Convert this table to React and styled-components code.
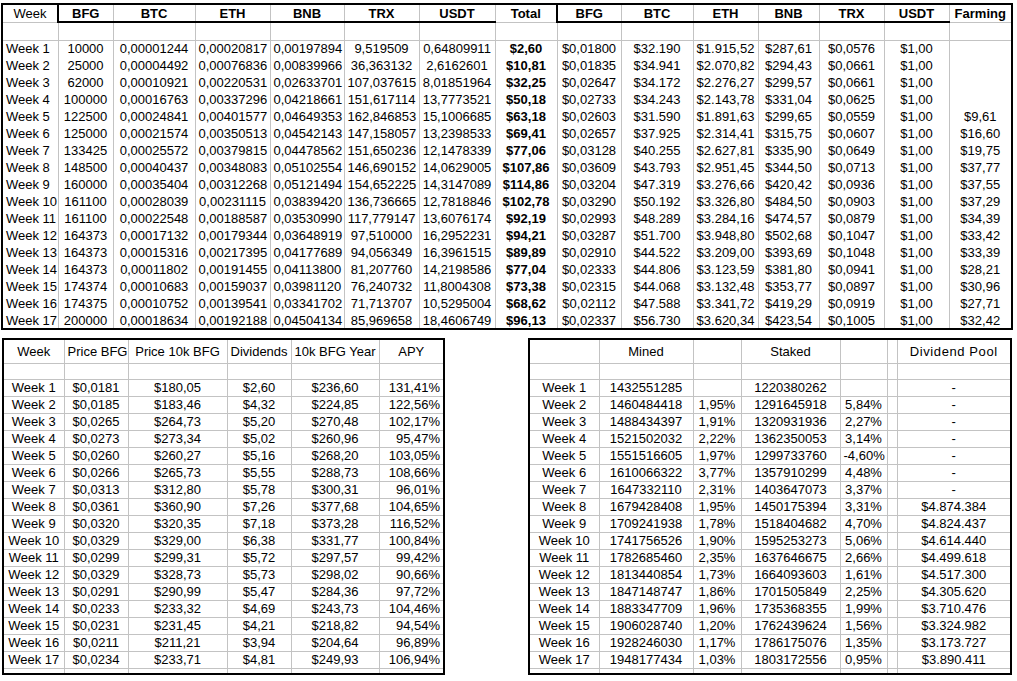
import React from "react";
import styled, { createGlobalStyle } from "styled-components";

const GRID = "#c3c3c3";
const INK = "#000";

const topHeads = [
    { t: "Week", w: 56 },
    { t: "BFG", w: 55, bold: true, edge: true, under: true },
    { t: "BTC", w: 82, bold: true, under: true },
    { t: "ETH", w: 75, bold: true, under: true },
    { t: "BNB", w: 74, bold: true, under: true },
    { t: "TRX", w: 75, bold: true, under: true },
    { t: "USDT", w: 76, bold: true, under: true },
    { t: "Total", w: 62, bold: true },
    { t: "BFG", w: 64, bold: true, edge: true, under: true },
    { t: "BTC", w: 72, bold: true, under: true },
    { t: "ETH", w: 65, bold: true, under: true },
    { t: "BNB", w: 61, bold: true, under: true },
    { t: "TRX", w: 65, bold: true, under: true },
    { t: "USDT", w: 65, bold: true, under: true },
    { t: "Farming", w: 63, bold: true },
];

const topRows = [
    "10000|0,00001244|0,00020817|0,00197894|9,519509|0,64809911|$2,60|$0,01800|$32.190|$1.915,52|$287,61|$0,0576|$1,00|",
    "25000|0,00004492|0,00076836|0,00839966|36,363132|2,6162601|$10,81|$0,01835|$34.941|$2.070,82|$294,43|$0,0661|$1,00|",
    "62000|0,00010921|0,00220531|0,02633701|107,037615|8,01851964|$32,25|$0,02647|$34.172|$2.276,27|$299,57|$0,0661|$1,00|",
    "100000|0,00016763|0,00337296|0,04218661|151,617114|13,7773521|$50,18|$0,02733|$34.243|$2.143,78|$331,04|$0,0625|$1,00|",
    "122500|0,00024841|0,00401577|0,04649353|162,846853|15,1006685|$63,18|$0,02603|$31.590|$1.891,63|$299,65|$0,0559|$1,00|$9,61",
    "125000|0,00021574|0,00350513|0,04542143|147,158057|13,2398533|$69,41|$0,02657|$37.925|$2.314,41|$315,75|$0,0607|$1,00|$16,60",
    "133425|0,00025572|0,00379815|0,04478562|151,650236|12,1478339|$77,06|$0,03128|$40.255|$2.627,81|$335,90|$0,0649|$1,00|$19,75",
    "148500|0,00040437|0,00348083|0,05102554|146,690152|14,0629005|$107,86|$0,03609|$43.793|$2.951,45|$344,50|$0,0713|$1,00|$37,77",
    "160000|0,00035404|0,00312268|0,05121494|154,652225|14,3147089|$114,86|$0,03204|$47.319|$3.276,66|$420,42|$0,0936|$1,00|$37,55",
    "161100|0,00028039|0,00231115|0,03839420|136,736665|12,7818846|$102,78|$0,03290|$50.192|$3.326,80|$484,50|$0,0903|$1,00|$37,29",
    "161100|0,00022548|0,00188587|0,03530990|117,779147|13,6076174|$92,19|$0,02993|$48.289|$3.284,16|$474,57|$0,0879|$1,00|$34,39",
    "164373|0,00017132|0,00179344|0,03648919|97,510000|16,2952231|$94,21|$0,03287|$51.700|$3.948,80|$502,68|$0,1047|$1,00|$33,42",
    "164373|0,00015316|0,00217395|0,04177689|94,056349|16,3961515|$89,89|$0,02910|$44.522|$3.209,00|$393,69|$0,1048|$1,00|$33,39",
    "164373|0,00011802|0,00191455|0,04113800|81,207760|14,2198586|$77,04|$0,02333|$44.806|$3.123,59|$381,80|$0,0941|$1,00|$28,21",
    "174374|0,00010683|0,00159037|0,03981120|76,240732|11,8004308|$73,38|$0,02315|$44.068|$3.132,48|$353,77|$0,0897|$1,00|$30,96",
    "174375|0,00010752|0,00139541|0,03341702|71,713707|10,5295004|$68,62|$0,02112|$47.588|$3.341,72|$419,29|$0,0919|$1,00|$27,71",
    "200000|0,00018634|0,00192188|0,04504134|85,969658|18,4606749|$96,13|$0,02337|$56.730|$3.620,34|$423,54|$0,1005|$1,00|$32,42",
];

const apyHeads = [
    { t: "Week", w: 61 },
    { t: "Price BFG", w: 64 },
    { t: "Price 10k BFG", w: 99 },
    { t: "Dividends", w: 64 },
    { t: "10k BFG Year", w: 88 },
    { t: "APY", w: 65 },
];

const apyRows = [
    "$0,0181|$180,05|$2,60|$236,60|131,41%",
    "$0,0185|$183,46|$4,32|$224,85|122,56%",
    "$0,0265|$264,73|$5,20|$270,48|102,17%",
    "$0,0273|$273,34|$5,02|$260,96|95,47%",
    "$0,0260|$260,27|$5,16|$268,20|103,05%",
    "$0,0266|$265,73|$5,55|$288,73|108,66%",
    "$0,0313|$312,80|$5,78|$300,31|96,01%",
    "$0,0361|$360,90|$7,26|$377,68|104,65%",
    "$0,0320|$320,35|$7,18|$373,28|116,52%",
    "$0,0329|$329,00|$6,38|$331,77|100,84%",
    "$0,0299|$299,31|$5,72|$297,57|99,42%",
    "$0,0329|$328,73|$5,73|$298,02|90,66%",
    "$0,0291|$290,99|$5,47|$284,36|97,72%",
    "$0,0233|$233,32|$4,69|$243,73|104,46%",
    "$0,0231|$231,45|$4,21|$218,82|94,54%",
    "$0,0211|$211,21|$3,94|$204,64|96,89%",
    "$0,0234|$233,71|$4,81|$249,93|106,94%",
];

const poolHeads = [
    { t: "", w: 70 },
    { t: "Mined", w: 94 },
    { t: "", w: 48 },
    { t: "Staked", w: 99 },
    { t: "", w: 47 },
    { t: "", w: 10 },
    { t: "Dividend Pool", w: 114, wide: true },
];

const poolRows = [
    "1432551285||1220380262|||-",
    "1460484418|1,95%|1291645918|5,84%||-",
    "1488434397|1,91%|1320931936|2,27%||-",
    "1521502032|2,22%|1362350053|3,14%||-",
    "1551516605|1,97%|1299733760|-4,60%||-",
    "1610066322|3,77%|1357910299|4,48%||-",
    "1647332110|2,31%|1403647073|3,37%||-",
    "1679428408|1,95%|1450175394|3,31%||$4.874.384",
    "1709241938|1,78%|1518404682|4,70%||$4.824.437",
    "1741756526|1,90%|1595253273|5,06%||$4.614.440",
    "1782685460|2,35%|1637646675|2,66%||$4.499.618",
    "1813440854|1,73%|1664093603|1,61%||$4.517.300",
    "1847148747|1,86%|1701505849|2,25%||$4.305.620",
    "1883347709|1,96%|1735368355|1,99%||$3.710.476",
    "1906028740|1,20%|1762439624|1,56%||$3.324.982",
    "1928246030|1,17%|1786175076|1,35%||$3.173.727",
    "1948177434|1,03%|1803172556|0,95%||$3.890.411",
];

const App = () => {
    return (
        <Page>
            <GlobalStyle />
            <Sheet $width={1012}>
                <colgroup>
                    {topHeads.map((h, i) => <col key={i} style={{ width: h.w }} />)}
                </colgroup>
                <thead>
                    <Row $h={18}>
                        {topHeads.map((h, i) => (
                            <TopHead key={i} $bold={h.bold} $edge={h.edge} $under={h.under}>
                                {h.t}
                            </TopHead>
                        ))}
                    </Row>
                </thead>
                <tbody>
                    <Row $h={18}>
                        {topHeads.map((h, i) => <BlankCell key={i} />)}
                    </Row>
                    {topRows.map((r, i) => (
                        <Row key={i} $h={17}>
                            <TopCell $align="left">Week {i + 1}</TopCell>
                            {r.split("|").map((v, j) => (
                                <TopCell key={j} $bold={j === 6}>{v}</TopCell>
                            ))}
                        </Row>
                    ))}
                </tbody>
            </Sheet>

            <Lower>
                <Sheet $width={443}>
                    <colgroup>
                        {apyHeads.map((h, i) => <col key={i} style={{ width: h.w }} />)}
                    </colgroup>
                    <thead>
                        <Row $h={24}>
                            {apyHeads.map((h, i) => <LowHead key={i}>{h.t}</LowHead>)}
                        </Row>
                    </thead>
                    <tbody>
                        <Row $h={16}>
                            {apyHeads.map((h, i) => <LowCell key={i} />)}
                        </Row>
                        {apyRows.map((r, i) => (
                            <Row key={i} $h={17}>
                                <LowCell>Week {i + 1}</LowCell>
                                {r.split("|").map((v, j) => (
                                    <LowCell key={j} $align={j === 4 ? "right" : "center"}>{v}</LowCell>
                                ))}
                            </Row>
                        ))}
                        <Row $h={5}>
                            {apyHeads.map((h, i) => <Sliver key={i} />)}
                        </Row>
                    </tbody>
                </Sheet>

                <Sheet $width={484}>
                    <colgroup>
                        {poolHeads.map((h, i) => <col key={i} style={{ width: h.w }} />)}
                    </colgroup>
                    <thead>
                        <Row $h={24}>
                            {poolHeads.map((h, i) => <LowHead key={i} $wide={h.wide}>{h.t}</LowHead>)}
                        </Row>
                    </thead>
                    <tbody>
                        <Row $h={16}>
                            {poolHeads.map((h, i) => <LowCell key={i} />)}
                        </Row>
                        {poolRows.map((r, i) => (
                            <Row key={i} $h={17}>
                                <LowCell>Week {i + 1}</LowCell>
                                {r.split("|").map((v, j) => (
                                    <LowCell key={j}>{v}</LowCell>
                                ))}
                            </Row>
                        ))}
                        <Row $h={5}>
                            {poolHeads.map((h, i) => <Sliver key={i} />)}
                        </Row>
                    </tbody>
                </Sheet>
            </Lower>
        </Page>
    );
};

export default App;

// Styled Components
const GlobalStyle = createGlobalStyle`
    html, body {
        margin: 0;
        padding: 0;
        background: #fff;
    }
    body {
        font-family: "Liberation Sans", Arial, sans-serif;
        font-size: 13px;
        color: ${INK};
    }
`;

const Page = styled.div`
    width: 1017px;
    height: 681px;
    padding: 3px 0 0 1px;
    box-sizing: border-box;
    overflow: hidden;
`;

const Sheet = styled.table`
    width: ${p => p.$width}px;
    border-collapse: collapse;
    table-layout: fixed;
    border: 2px solid #000;
`;

const Row = styled.tr`
    height: ${p => p.$h}px;
`;

const cellBase = `
    padding: 0 3px;
    white-space: nowrap;
    overflow: hidden;
    font-size: 13px;
    line-height: 15px;
    color: ${INK};
    vertical-align: middle;
`;

const TopHead = styled.th`
    ${cellBase}
    text-align: center;
    font-weight: ${p => (p.$bold ? 700 : 400)};
    border-top: 2px solid #000;
    border-left: ${p => (p.$edge ? "2px solid #000" : `1px solid ${GRID}`)};
    border-right: 1px solid ${GRID};
    border-bottom: ${p => (p.$under ? "2px solid #000" : `1px solid ${GRID}`)};
`;

const BlankCell = styled.td`
    ${cellBase}
    border-left: 1px solid ${GRID};
    border-right: 1px solid ${GRID};
    border-bottom: 1px solid ${GRID};
`;

const TopCell = styled.td`
    ${cellBase}
    text-align: ${p => p.$align || "center"};
    font-weight: ${p => (p.$bold ? 700 : 400)};
    border-left: 1px solid ${GRID};
    border-right: 1px solid ${GRID};
    border-top: none;
    border-bottom: none;
`;

const Lower = styled.div`
    display: flex;
    align-items: flex-start;
    gap: 83px;
    margin-top: 8px;
    padding-left: 1px;
`;

const LowHead = styled.th`
    ${cellBase}
    text-align: center;
    font-weight: 400;
    letter-spacing: ${p => (p.$wide ? "0.6px" : "0")};
    border: 1px solid ${GRID};
`;

const LowCell = styled.td`
    ${cellBase}
    text-align: ${p => p.$align || "center"};
    border: 1px solid ${GRID};
`;

const Sliver = styled.td`
    padding: 0;
    height: 4px;
    line-height: 0;
    font-size: 0;
    border-left: 1px solid ${GRID};
    border-right: 1px solid ${GRID};
    border-top: 1px solid ${GRID};
    border-bottom: none;
`;
